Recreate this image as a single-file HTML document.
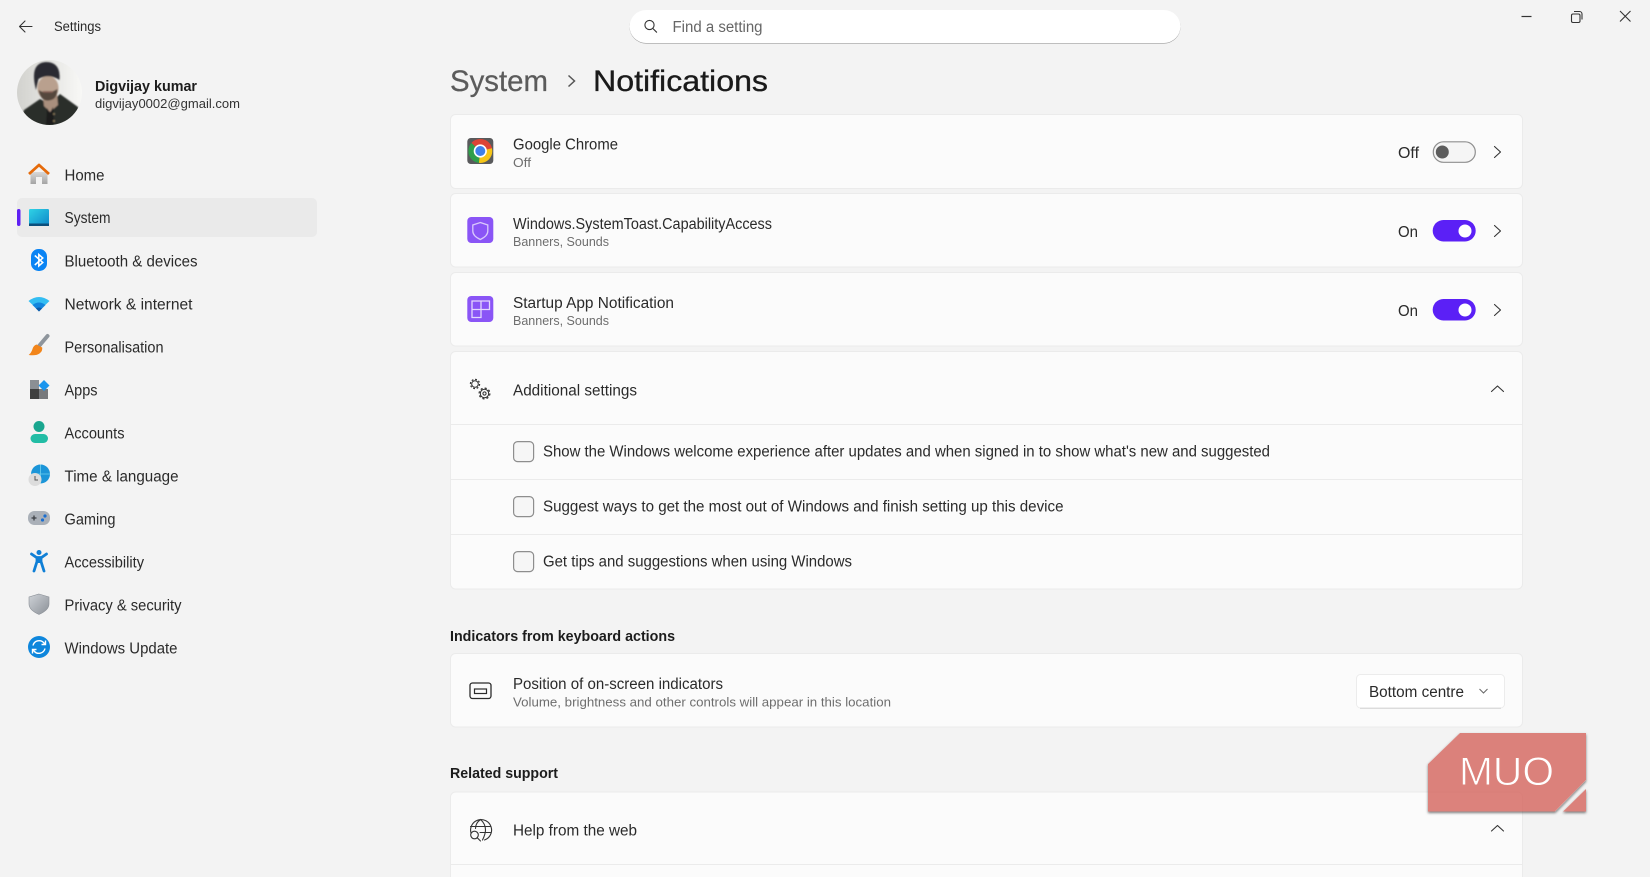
<!DOCTYPE html>
<html lang="en"><head><meta charset="utf-8"><title>Settings</title>
<style>
html,body{margin:0;padding:0;width:1650px;height:877px;overflow:hidden;background:#f3f3f3}
svg{display:block;position:absolute;left:0;top:0;filter:blur(.35px)}
text{font-family:"Liberation Sans",sans-serif;fill:#202020;font-size:15px}
.n{font-size:15.5px;fill:#2a2a2a}
.s{font-size:13px;fill:#6e6e6e}
.b{font-weight:700;font-size:15px;fill:#1c1c1c}
.c{fill:#fbfbfb;stroke:#ebebeb;stroke-width:1}
.l{stroke:#ebebeb;stroke-width:1}
.i{fill:none;stroke:#333;stroke-width:1.1;stroke-linecap:round;stroke-linejoin:round}
.cb{fill:#f6f6f6;stroke:#8e8e8e;stroke-width:1.2}
</style></head><body>
<svg width="1650" height="877" viewBox="0 0 1650 877" xmlns="http://www.w3.org/2000/svg">
<defs>
<linearGradient id="gSys" x1="0" y1="0" x2="1" y2="1"><stop offset="0" stop-color="#2fd3e6"/><stop offset="1" stop-color="#0f87c9"/></linearGradient>
<linearGradient id="gRoof" x1="0" y1="0" x2="0" y2="1"><stop offset="0" stop-color="#d8d8d8"/><stop offset="1" stop-color="#a4a4a4"/></linearGradient>
<linearGradient id="gBg" x1="0" y1="0" x2="1" y2="0"><stop offset="0" stop-color="#d2d2ce"/><stop offset="1" stop-color="#f8f8f6"/></linearGradient>
<linearGradient id="gShield" x1="0" y1="0" x2="1" y2="1"><stop offset="0" stop-color="#cfd3d8"/><stop offset="1" stop-color="#8b9097"/></linearGradient>
<clipPath id="av"><circle cx="49.500" cy="92.500" r="32.500"/></clipPath>
<clipPath id="cr"><circle cx="480.300" cy="151" r="12"/></clipPath>
<filter id="ab"><feGaussianBlur stdDeviation=".8"/></filter>
<filter id="sh" x="-10%" y="-10%" width="120%" height="125%" color-interpolation-filters="sRGB">
<feComponentTransfer in="SourceAlpha" result="solid"><feFuncA type="linear" slope="5"/></feComponentTransfer>
<feGaussianBlur in="solid" stdDeviation="1.200" result="blur"/>
<feOffset in="blur" dy="1.500" result="off"/>
<feFlood flood-color="#000" flood-opacity=".5"/>
<feComposite in2="off" operator="in" result="shadow"/>
<feComposite in="shadow" in2="solid" operator="out" result="outer"/>
<feMerge><feMergeNode in="outer"/><feMergeNode in="SourceGraphic"/></feMerge>
</filter>
</defs>

<!-- title bar -->
<path class="i" d="M32 26.500H19.500M25 21l-5.500 5.500L25 32"/>
<text x="54" y="31" style="font-size:13.500px;fill:#2a2a2a" textLength="47" lengthAdjust="spacingAndGlyphs">Settings</text>

<rect x="629.500" y="10.500" width="551" height="33" rx="16.500" fill="#8a8a8a"/>
<rect x="629.500" y="10" width="551" height="33" rx="16.500" fill="#fff"/>
<circle cx="649.500" cy="25" r="4.600" class="i"/><path class="i" d="M653 28.600l3.600 3.600"/>
<text x="672.500" y="32" style="font-size:15.500px;fill:#666" textLength="90" lengthAdjust="spacingAndGlyphs">Find a setting</text>

<path d="M1521.500 16.500h10" stroke="#333" stroke-width="1.200"/>
<rect x="1571.500" y="14" width="8.500" height="8.500" rx="1.500" fill="none" stroke="#333" stroke-width="1.100"/>
<path d="M1574 11.500h5.500a2.500 2.500 0 0 1 2.500 2.500v5.500" fill="none" stroke="#333" stroke-width="1.100"/>
<path d="M1620 11l10.500 10.500M1630.500 11L1620 21.500" stroke="#333" stroke-width="1.100"/>

<!-- avatar -->
<g clip-path="url(#av)">
<rect x="17" y="60" width="65" height="65" fill="url(#gBg)"/>
<g filter="url(#ab)">
<path d="M18 127L24 110 40 99 50 104 60 94 78 107 84 127z" fill="#2b2d2b"/>
<path d="M43 96L57 94 58 105 50 112 44 106z" fill="#a98f7d"/>
<ellipse cx="48" cy="88" rx="10.500" ry="12" fill="#b9a08e"/>
<path d="M38.500 90q9 5 19-1q0 7-4 10q-5 3-10 .5q-4-3-5-9.500z" fill="#55463c"/>
<path d="M43 91h10v1.500H43z" fill="#8a6458"/>
<path d="M36 90Q29 63 46 62 61 62 59.500 80 49 73 38.500 79z" fill="#2a2a30"/>
<path d="M47 108l3 5 3-6 1 18h-8z" fill="#1a1a1a"/>
<circle cx="54" cy="114" r="1" fill="#8b7a5a"/><circle cx="54" cy="121" r="1" fill="#8b7a5a"/>
</g>
</g>
<text x="95" y="91" class="b" textLength="102" lengthAdjust="spacingAndGlyphs">Digvijay kumar</text>
<text x="95" y="108" style="font-size:13px;fill:#333" textLength="145" lengthAdjust="spacingAndGlyphs">digvijay0002@gmail.com</text>

<!-- nav -->
<rect x="17" y="198" width="300" height="39" rx="5" fill="#eaeaea"/>
<rect x="17" y="209" width="3.500" height="17" rx="1.700" fill="#5f20f3"/>

<path d="M30.500 184v-12h17v12h-5.500v-7h-6v7z" fill="url(#gRoof)"/>
<path d="M29 174l10-9 10 9" fill="none" stroke="#e56a0a" stroke-width="2.800" stroke-linejoin="round"/>
<text x="64.500" y="180.500" class="n" textLength="40" lengthAdjust="spacingAndGlyphs">Home</text>

<rect x="29" y="209" width="20" height="16.500" rx="1.200" fill="url(#gSys)"/>
<rect x="29" y="223.500" width="20" height="2.500" fill="#0c4f7c"/>
<text x="64.500" y="223" class="n" textLength="46" lengthAdjust="spacingAndGlyphs">System</text>

<rect x="31" y="249" width="16" height="22" rx="7.500" fill="#0a84f4"/>
<path d="M34.800 255.500l8 7-4 3.500v-11.500l4 3.500-8 7" fill="none" stroke="#fff" stroke-width="1.500"/>
<text x="64.500" y="266.500" class="n" textLength="133" lengthAdjust="spacingAndGlyphs">Bluetooth &amp; devices</text>

<path d="M28.500 301q10.500-8 21 0l-10.500 10z" fill="#33bdf2"/>
<path d="M32.500 305q6.500-5 13 0l-6.500 6.500z" fill="#1285dd"/>
<path d="M36 308.500q3-2 6 0l-3 3z" fill="#0b5aa8"/>
<text x="64.500" y="309.500" class="n" textLength="128" lengthAdjust="spacingAndGlyphs">Network &amp; internet</text>

<path d="M39 346l8.500-10" fill="none" stroke="#8e959c" stroke-width="4" stroke-linecap="round"/>
<path d="M36.500 344.500q-3 1-4 4.500t-3.800 6q7.500 1 10.800-1.500t2.700-6z" fill="#f2851a"/>
<text x="64.500" y="352.700" class="n" textLength="99" lengthAdjust="spacingAndGlyphs">Personalisation</text>

<rect x="30" y="380" width="9" height="9" fill="#8b8f94"/>
<rect x="30" y="389" width="9" height="10" fill="#3f3f3f"/>
<rect x="39" y="389" width="9" height="10" fill="#77797c"/>
<path d="M44 380l5.500 5.500L44 391l-5.500-5.500z" fill="#1b96ee"/>
<text x="64.500" y="395.500" class="n" textLength="33" lengthAdjust="spacingAndGlyphs">Apps</text>

<circle cx="39" cy="426.500" r="5.500" fill="#19a68f"/>
<rect x="30.500" y="434" width="17.500" height="9" rx="4.500" fill="#22bda5"/>
<text x="64.500" y="438.500" class="n" textLength="60" lengthAdjust="spacingAndGlyphs">Accounts</text>

<circle cx="40.500" cy="474" r="9.500" fill="#1b95d8"/>
<path d="M31 474h19M40.500 464.500v19" stroke="#6fd0ef" stroke-width=".8"/>
<circle cx="35" cy="479.500" r="6.500" fill="#dcdcdc"/>
<path d="M35 476v4h3" fill="none" stroke="#555" stroke-width="1"/>
<text x="64.500" y="481.500" class="n" textLength="114" lengthAdjust="spacingAndGlyphs">Time &amp; language</text>

<rect x="28" y="511" width="22" height="14" rx="6.500" fill="#aab0b8"/>
<path d="M31.500 518h5M34 515.500v5" stroke="#3c3f44" stroke-width="1.300"/>
<circle cx="45" cy="516" r="1.600" fill="#1a6ed0"/><circle cx="42.500" cy="520" r="1.600" fill="#1a6ed0"/>
<text x="64.500" y="524.500" class="n" textLength="51" lengthAdjust="spacingAndGlyphs">Gaming</text>

<circle cx="39" cy="552.500" r="2.500" fill="#0f7fd6"/>
<path d="M31.500 554l5 3.500h5l5-3.500M37 557.500v4l-3 9.500M41 557.500v4l3 9.500" fill="none" stroke="#0f7fd6" stroke-width="2.800" stroke-linecap="round" stroke-linejoin="round"/>
<rect x="36.500" y="557" width="5" height="6" fill="#0f7fd6"/>
<text x="64.500" y="567.500" class="n" textLength="79.500" lengthAdjust="spacingAndGlyphs">Accessibility</text>

<path d="M39 594l10 3v7q0 6-10 10.500Q29 610 29 604v-7z" fill="url(#gShield)" stroke="#8b9097" stroke-width=".6"/>
<text x="64.500" y="610.500" class="n" textLength="117" lengthAdjust="spacingAndGlyphs">Privacy &amp; security</text>

<circle cx="39" cy="647" r="11" fill="#0e86dc"/>
<path d="M33 645.500a6.300 6.300 0 0 1 11-2.500l1.200 1.300M45 648.500a6.300 6.300 0 0 1-11 2.500l-1.200-1.300M45.500 640.500v4h-4M32.500 653.500v-4h4" fill="none" stroke="#fff" stroke-width="1.400"/>
<text x="64.500" y="653.500" class="n" textLength="113" lengthAdjust="spacingAndGlyphs">Windows Update</text>

<!-- header -->
<text x="450" y="91" style="font-size:30px;fill:#5b5b5b;stroke:#5b5b5b;stroke-width:.25" textLength="98" lengthAdjust="spacingAndGlyphs">System</text>
<path d="M568.500 75.500l6 5.500-6 5.500" fill="none" stroke="#555" stroke-width="1.500"/>
<text x="593" y="91" style="font-size:30px;fill:#1a1a1a;stroke:#1a1a1a;stroke-width:.35" textLength="175" lengthAdjust="spacingAndGlyphs">Notifications</text>

<!-- card 1 -->
<rect class="c" x="450.500" y="114.500" width="1072" height="74" rx="5"/>
<rect x="467.300" y="138" width="26" height="26" rx="3.500" fill="#595a5c"/>
<g clip-path="url(#cr)">
<path d="M468 139h25v10h-13z" fill="#dd4436"/>
<path d="M480.300 151l-12-11v24h12z" fill="#2f9e4a"/>
<path d="M480.300 151l-12-11h25v9z" fill="#dd4436"/>
<path d="M480.300 151l12.500-3v16h-14z" fill="#f5c518"/>
</g>
<circle cx="480.300" cy="151" r="6.600" fill="#fff"/>
<circle cx="480.300" cy="151" r="5" fill="#3f80ea"/>
<text x="513" y="149.500" class="n" textLength="105" lengthAdjust="spacingAndGlyphs">Google Chrome</text>
<text x="513" y="167" class="s" textLength="18" lengthAdjust="spacingAndGlyphs">Off</text>
<text x="1398" y="158" class="n" textLength="21" lengthAdjust="spacingAndGlyphs">Off</text>
<rect x="1433.300" y="141.800" width="42" height="20.500" rx="10.200" fill="#f5f5f5" stroke="#8f8f8f" stroke-width="1.200"/>
<circle cx="1442.300" cy="152" r="6.500" fill="#5d5d5d"/>
<path d="M1494.500 146.500l6 5.500-6 5.500" class="i"/>

<!-- card 2 -->
<rect class="c" x="450.500" y="193.500" width="1072" height="73.500" rx="5"/>
<rect x="467.300" y="217" width="26" height="26" rx="4" fill="#8a55f6"/>
<path d="M480.300 222.500l7.500 2.500v6q0 5-7.500 8.500q-7.500-3.500-7.500-8.500v-6z" fill="none" stroke="#d9c9fc" stroke-width="1.300"/>
<text x="513" y="229" class="n" textLength="259" lengthAdjust="spacingAndGlyphs">Windows.SystemToast.CapabilityAccess</text>
<text x="513" y="246" class="s" textLength="96" lengthAdjust="spacingAndGlyphs">Banners, Sounds</text>
<text x="1398" y="237" class="n" textLength="20" lengthAdjust="spacingAndGlyphs">On</text>
<rect x="1432.700" y="220" width="43" height="21.500" rx="10.700" fill="#5b20f6"/>
<circle cx="1465" cy="231" r="6.500" fill="#fff"/>
<path d="M1494.500 225.500l6 5.500-6 5.500" class="i"/>

<!-- card 3 -->
<rect class="c" x="450.500" y="272.500" width="1072" height="73.500" rx="5"/>
<rect x="467.300" y="296" width="26" height="26" rx="4" fill="#8a55f6"/>
<path d="M472 301h9v8.500h-9zM481 301h8.500v8.500H481zM472 309.500h9v8h-9z" fill="none" stroke="#e4d8fd" stroke-width="1.300"/>
<text x="513" y="308" class="n" textLength="161" lengthAdjust="spacingAndGlyphs">Startup App Notification</text>
<text x="513" y="325" class="s" textLength="96" lengthAdjust="spacingAndGlyphs">Banners, Sounds</text>
<text x="1398" y="316" class="n" textLength="20" lengthAdjust="spacingAndGlyphs">On</text>
<rect x="1432.700" y="299" width="43" height="21.500" rx="10.700" fill="#5b20f6"/>
<circle cx="1465" cy="310" r="6.500" fill="#fff"/>
<path d="M1494.500 304.500l6 5.500-6 5.500" class="i"/>

<!-- card 4 -->
<rect class="c" x="450.500" y="351.500" width="1072" height="237.500" rx="5"/>
<path class="l" d="M451 424.500h1071M451 479.500h1071M451 534.500h1071"/>
<g fill="none" stroke="#2b2b2b">
<circle cx="475" cy="384" r="3.300" stroke-width="1"/>
<circle cx="475" cy="384" r="4.600" stroke-width="1.200" stroke-dasharray="1.800 1.810"/>
<circle cx="484.500" cy="393.500" r="1.600" stroke-width="1"/>
<circle cx="484.500" cy="393.500" r="4.200" stroke-width="1"/>
<circle cx="484.500" cy="393.500" r="5.400" stroke-width="1.200" stroke-dasharray="2.100 2.140"/>
</g>
<text x="513" y="395.500" class="n" textLength="124" lengthAdjust="spacingAndGlyphs">Additional settings</text>
<path d="M1491.500 391.500l6-5.500 6 5.500" class="i"/>
<rect class="cb" x="513.600" y="441.600" width="20" height="20" rx="4"/>
<text x="543" y="456.700" class="n" textLength="727" lengthAdjust="spacingAndGlyphs">Show the Windows welcome experience after updates and when signed in to show what's new and suggested</text>
<rect class="cb" x="513.600" y="496.600" width="20" height="20" rx="4"/>
<text x="543" y="511.700" class="n" textLength="520.500" lengthAdjust="spacingAndGlyphs">Suggest ways to get the most out of Windows and finish setting up this device</text>
<rect class="cb" x="513.600" y="551.600" width="20" height="20" rx="4"/>
<text x="543" y="566.700" class="n" textLength="309" lengthAdjust="spacingAndGlyphs">Get tips and suggestions when using Windows</text>

<!-- indicators -->
<text x="450" y="641" class="b" textLength="225" lengthAdjust="spacingAndGlyphs">Indicators from keyboard actions</text>
<rect class="c" x="450.500" y="653.500" width="1072" height="73.500" rx="5"/>
<rect x="470" y="683" width="21" height="15.500" rx="2.500" fill="none" stroke="#2b2b2b" stroke-width="1.300"/>
<rect x="474.500" y="689" width="12" height="4.500" fill="none" stroke="#2b2b2b" stroke-width="1.200"/>
<text x="513" y="689" class="n" textLength="210" lengthAdjust="spacingAndGlyphs">Position of on-screen indicators</text>
<text x="513" y="706.700" class="s" textLength="378" lengthAdjust="spacingAndGlyphs">Volume, brightness and other controls will appear in this location</text>
<rect x="1356.500" y="674.500" width="148" height="33.500" rx="4" fill="#fff" stroke="#ececec" stroke-width="1"/>
<path d="M1360 708.300h141" stroke="#d2d2d2" stroke-width="1"/>
<text x="1369" y="697" class="n" textLength="95" lengthAdjust="spacingAndGlyphs">Bottom centre</text>
<path d="M1479.500 689l4 4 4-4" fill="none" stroke="#666" stroke-width="1"/>

<!-- related -->
<text x="450" y="778" class="b" textLength="108" lengthAdjust="spacingAndGlyphs">Related support</text>
<path class="c" d="M450.500 890V797a5 5 0 0 1 5-5h1062a5 5 0 0 1 5 5v93z"/>
<path class="l" d="M451 864.500h1071"/>
<g class="i" style="stroke-width:1.100">
<path d="M471 833a10.500 10.500 0 1 1 13.500 7"/>
<path d="M480.500 819.500c-3.500 2.500-5 6-5 9M480.500 819.500c3.500 3 5 7 5 10.500 0 4-1.500 7-3 10M470.500 826.500h20M480 832.500h10.500"/>
<circle cx="474.500" cy="835" r="3.800"/>
<path d="M477.500 838l3 3"/>
</g>
<text x="513" y="835.500" class="n" textLength="124" lengthAdjust="spacingAndGlyphs">Help from the web</text>
<path d="M1491.500 831l6-5.500 6 5.500" class="i"/>

<!-- MUO watermark -->
<g filter="url(#sh)">
<path d="M1460 733H1586V780L1555 811.500H1428V764Z" fill="#d5645c" fill-opacity=".8"/>
<path d="M1586 789V811.500H1563Z" fill="#d5645c" fill-opacity=".8"/>
</g>
<text x="1459" y="785" style="font-size:40px;fill:#fff;stroke:#dc827b;stroke-width:.9" textLength="95" lengthAdjust="spacingAndGlyphs">MUO</text>
</svg>
</body></html>
